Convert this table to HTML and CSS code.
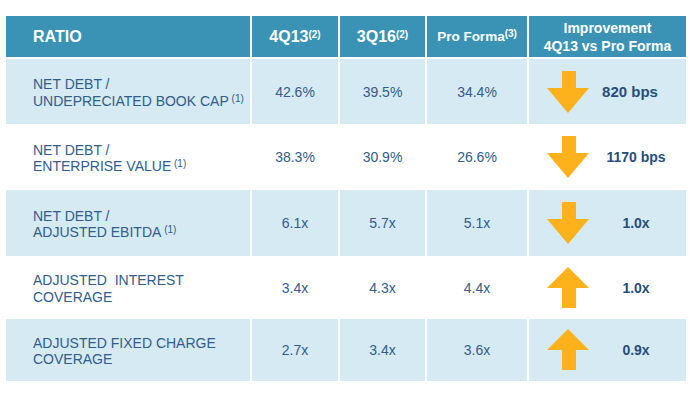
FILE: index.html
```html
<!DOCTYPE html>
<html>
<head>
<meta charset="utf-8">
<link rel="stylesheet" href="styles.css">
</head>
<body>
<div class="table">
  <div class="row head">
    <div class="cell first"><span class="ratio">RATIO</span></div>
    <div class="cell c"><span class="hq">4Q13<sup>(2)</sup></span></div>
    <div class="cell c"><span class="hq">3Q16<sup>(2)</sup></span></div>
    <div class="cell c"><span class="hp">Pro Forma<sup>(3)</sup></span></div>
    <div class="cell c"><span class="hi">Improvement<br>4Q13 vs Pro Forma</span></div>
  </div>
  <div class="row blue r1">
    <div class="cell first"><span class="lbl">NET DEBT /<br>UNDEPRECIATED BOOK CAP<sup> (1)</sup></span></div>
    <div class="cell c">42.6%</div>
    <div class="cell c">39.5%</div>
    <div class="cell c">34.4%</div>
    <div class="cell imp">
      <svg class="arrow" width="42" height="42" viewBox="0 0 42 42"><polygon points="15,0 29,0 29,17 42,17 21,42 0,17 15,17"/></svg>
      <span class="val shift">820 bps</span>
    </div>
  </div>
  <div class="row white r2">
    <div class="cell first"><span class="lbl">NET DEBT /<br>ENTERPRISE VALUE<sup> (1)</sup></span></div>
    <div class="cell c">38.3%</div>
    <div class="cell c">30.9%</div>
    <div class="cell c">26.6%</div>
    <div class="cell imp">
      <svg class="arrow" width="42" height="42" viewBox="0 0 42 42"><polygon points="15,0 29,0 29,17 42,17 21,42 0,17 15,17"/></svg>
      <span class="val">1170 bps</span>
    </div>
  </div>
  <div class="row blue r3">
    <div class="cell first"><span class="lbl">NET DEBT /<br>ADJUSTED EBITDA<sup> (1)</sup></span></div>
    <div class="cell c">6.1x</div>
    <div class="cell c">5.7x</div>
    <div class="cell c">5.1x</div>
    <div class="cell imp">
      <svg class="arrow" width="42" height="42" viewBox="0 0 42 42"><polygon points="15,0 29,0 29,17 42,17 21,42 0,17 15,17"/></svg>
      <span class="val">1.0x</span>
    </div>
  </div>
  <div class="row white r4">
    <div class="cell first"><span class="lbl">ADJUSTED&nbsp; INTEREST<br>COVERAGE</span></div>
    <div class="cell c">3.4x</div>
    <div class="cell c">4.3x</div>
    <div class="cell c">4.4x</div>
    <div class="cell imp">
      <svg class="arrow" width="42" height="42" viewBox="0 0 42 42"><polygon points="21,0 42,21 29,21 29,41 15,41 15,21 0,21"/></svg>
      <span class="val">1.0x</span>
    </div>
  </div>
  <div class="row blue r5">
    <div class="cell first"><span class="lbl">ADJUSTED FIXED CHARGE<br>COVERAGE</span></div>
    <div class="cell c">2.7x</div>
    <div class="cell c">3.4x</div>
    <div class="cell c">3.6x</div>
    <div class="cell imp">
      <svg class="arrow" width="42" height="42" viewBox="0 0 42 42"><polygon points="21,0 42,21 29,21 29,41 15,41 15,21 0,21"/></svg>
      <span class="val">0.9x</span>
    </div>
  </div>
</div>
</body>
</html>
```
FILE: styles.css
```css
html, body {
  margin: 0;
  padding: 0;
  background: #ffffff;
}
body {
  font-family: "Liberation Sans", Arial, sans-serif;
  color: #325c8b;
}
.table {
  margin: 16px 0 0 6px;
  width: 680px;
  display: flex;
  flex-direction: column;
}
.row {
  display: grid;
  grid-template-columns: 244px 86px 85px 100px 157px;
  column-gap: 2px;
}
.cell {
  display: flex;
  align-items: center;
  font-size: 14px;
  line-height: 16px;
}
.c {
  justify-content: center;
  text-align: center;
}
.first {
  padding-left: 27px;
}
.head {
  height: 41px;
  margin-bottom: 2px;
}
.head .cell {
  background: #3a93b5;
  color: #ffffff;
  font-weight: bold;
}
.ratio {
  font-size: 16px;
  line-height: 18px;
}
.hq {
  font-size: 16px;
  line-height: 18px;
}
.hp {
  font-size: 13.5px;
  line-height: 18px;
}
.hi {
  font-size: 14px;
  line-height: 18px;
  padding-top: 1px;
}
.head sup {
  font-size: 10px;
  line-height: 0;
  vertical-align: 4px;
}
.lbl {
  padding-top: 2px;
  line-height: 16.3px;
}
.lbl sup {
  font-size: 10px;
  line-height: 0;
  vertical-align: 4px;
}
.blue .cell {
  background: #d5eaf2;
}
.white .cell {
  background: #ffffff;
}
.r1 { height: 65px; }
.r2 { height: 66px; }
.r3 { height: 66px; }
.r4 { height: 63px; }
.r5 { height: 62px; }
.imp {
  padding-left: 18px;
}
.arrow {
  flex: none;
  display: block;
  fill: #fdb11b;
}
.val {
  flex: 1;
  text-align: center;
  font-weight: bold;
  font-size: 14px;
  color: #284d79;
  padding-right: 3px;
}
.val.shift {
  padding-right: 15px;
  font-size: 15px;
}
```
